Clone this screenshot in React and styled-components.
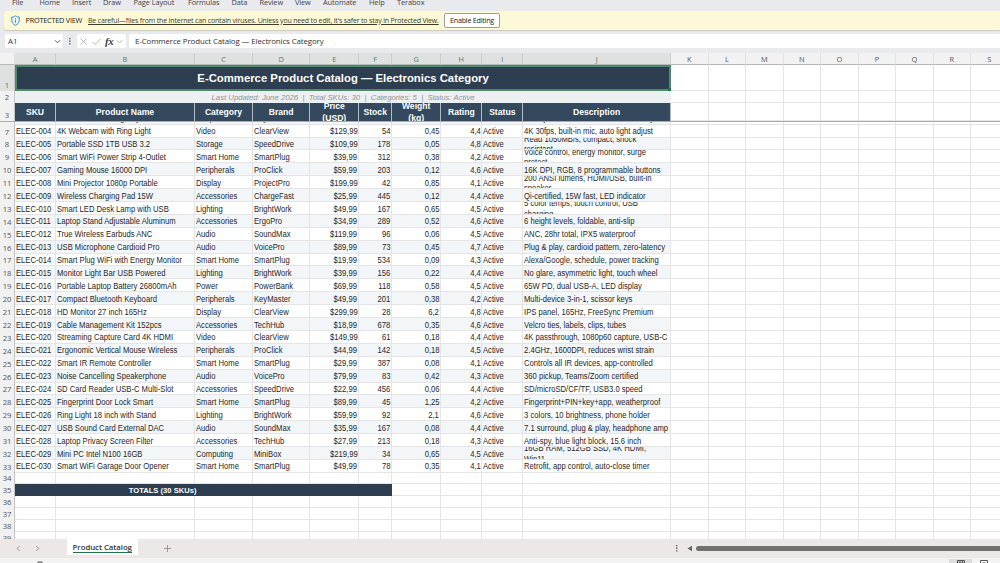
import { useState } from 'react';
import styled, { createGlobalStyle, css } from 'styled-components';

const theme = {
  ui: "'Open Sans', 'Noto Sans', sans-serif",
  sheet: "'Liberation Sans', Arial, sans-serif",
  navy: '#2c3e50',
  slate: '#34495e',
  green: '#217346',
  line: '#e5e5e5',
  chrome: '#e8eaee',
};

const GlobalStyle = createGlobalStyle`
  * {
    box-sizing: border-box;
  }

  body {
    margin: 0;
    overflow: hidden;
    background: ${theme.chrome};
  }
`;

const Window = styled.div`
  display: flex;
  flex-direction: column;
  width: 1000px;
  height: 563px;
  overflow: hidden;
  font-family: ${theme.ui};
  color: #333;
`;

const MenuBar = styled.nav`
  display: flex;
  flex: none;
  height: 11px;
  padding-left: 12px;
`;

const MenuItem = styled.span`
  flex: none;
  width: ${(p) => p.$width}px;
  margin-top: -3px;
  font-size: 7.4px;
  line-height: 11px;
  letter-spacing: -0.1px;
  white-space: nowrap;
  color: #444;
`;

const Notice = styled.div`
  display: flex;
  flex: none;
  align-items: center;
  height: 18.5px;
  margin-left: 4px;
  padding-left: 7px;
  border-radius: 3px 0 0 3px;
  background: #fdf9d6;
  box-shadow: 0 1px 1px #c9c9c5;
  font-size: 7.3px;
  white-space: nowrap;
`;

const NoticeTitle = styled.span`
  flex: none;
  width: 62.5px;
  margin-left: 5.5px;
  letter-spacing: -0.22px;
  color: #222;
`;

const NoticeLink = styled.span`
  flex: none;
  width: 349px;
  font-size: 7px;
  text-decoration: underline;
  letter-spacing: -0.17px;
  color: #3d3d2c;
`;

const EnableButton = styled.button`
  width: 56px;
  height: 15px;
  margin-left: 7px;
  padding: 0;
  border: 1px solid #9d9d9d;
  border-radius: 2px;
  background: #fff;
  font-family: inherit;
  font-size: 7.2px;
  line-height: 12px;
  letter-spacing: -0.25px;
  color: #222;
`;

const FormulaBar = styled.div`
  display: flex;
  flex: none;
  height: 23.5px;
  padding: 4.5px 0 5px 5px;
`;

const NameBox = styled.div`
  display: flex;
  align-items: center;
  justify-content: space-between;
  width: 58px;
  padding: 0 2px 0 3px;
  border-radius: 2px;
  background: #fff;
  font-size: 7.9px;
`;

const Dots = styled.div`
  display: flex;
  align-items: center;
  justify-content: center;
  width: 14px;
`;

const FormulaTools = styled.div`
  display: flex;
  align-items: center;
  width: 49px;
  padding-left: 2px;
  gap: 3px;
  border-radius: 2px;
  background: #fff;
`;

const Fx = styled.span`
  font-family: 'Liberation Serif', serif;
  font-size: 11px;
  font-style: italic;
  font-weight: bold;
  line-height: 10px;
  letter-spacing: -0.4px;
  color: #444;
`;

const FormulaInput = styled.div`
  flex: 1;
  margin-left: 3px;
  padding-left: 6px;
  border-radius: 2px 0 0 2px;
  background: #fff;
  font-size: 7.9px;
  line-height: 14px;
  letter-spacing: -0.12px;
  white-space: nowrap;
`;

const COLUMNS = '15px 41px 139px 58px 57.2px 49.2px 32.7px 49.2px 41.2px 40.7px 148px repeat(9, 37.5px)';

const Sheet = styled.main`
  flex: none;
  height: 486px;
  overflow: hidden;
  background: #fff;
`;

const GridRow = styled.div`
  display: grid;
  flex: none;
  grid-template-columns: ${COLUMNS};
  height: ${(p) => p.$height}px;
  width: 1030px;
  overflow: hidden;
`;

const Letter = styled.div`
  display: flex;
  align-items: flex-end;
  justify-content: center;
  border-right: 1px solid ${(p) => (p.$active ? '#cdcfce' : '#e2e2e2')};
  border-bottom: 1px solid #b5bab7;
  background: ${(p) => (p.$active ? '#dfe0e0' : '#f2f2f2')};
  font-size: 7.4px;
  line-height: 10px;
  color: ${(p) => (p.$active ? '#557a67' : '#555')};
`;

const RowNumber = styled.div`
  display: flex;
  align-items: flex-end;
  justify-content: center;
  border-right: 1px solid #c4c4c4;
  background: ${(p) => (p.$active ? '#dfe0e0' : '#f1f1f1')};
  font-size: 7.7px;
  line-height: 11px;
  letter-spacing: -0.1px;
  color: ${(p) => (p.$active ? '#557a67' : '#555')};
`;

const Cell = styled.div`
  display: flex;
  align-items: center;
  justify-content: ${(p) => (p.$right ? 'flex-end' : 'flex-start')};
  min-width: 0;
  overflow: hidden;
  padding: 1.6px 1px 0;
  border-right: 1px solid ${theme.line};
  border-bottom: 1px solid ${theme.line};
  background: ${(p) => (p.$shaded ? '#f3f6f9' : '#fff')};
`;

// condensed cell face: taller glyphs on the same advance width
const CellText = styled.span`
  flex: none;
  font-family: ${theme.sheet};
  font-size: 8.5px;
  line-height: 10.4px;
  white-space: pre;
  transform: scaleX(0.9);
  transform-origin: ${(p) => (p.$right ? 'right' : 'left')} center;
  color: #262626;
`;

const bar = css`
  display: flex;
  align-items: center;
  justify-content: center;
  font-family: ${theme.sheet};
  white-space: nowrap;
`;

const TitleCell = styled.div`
  ${bar}
  position: relative;
  grid-column: span 10;
  border: 2px solid #4d8a69;
  background: ${theme.navy};
  font-size: 11.33px;
  font-weight: bold;
  color: #fff;
`;

const FillHandle = styled.i`
  position: absolute;
  right: -2px;
  bottom: -2px;
  width: 3px;
  height: 3px;
  background: ${theme.green};
`;

const SubtitleCell = styled.div`
  ${bar}
  grid-column: span 10;
  padding-top: 1px;
  background: #ecf0f1;
  font-size: 7.75px;
  font-style: italic;
  white-space: pre;
  color: #8f9496;
`;

const HeadCell = styled.div`
  ${bar}
  overflow: hidden;
  padding-top: 0.7px;
  border-right: 1px solid #b3bcc4;
  background: ${theme.slate};
  font-size: 8.6px;
  font-weight: bold;
  line-height: 12px;
  text-align: center;
  white-space: pre-line;
  color: #fff;
`;

const TotalsCell = styled.div`
  ${bar}
  grid-column: span 4;
  background: ${theme.navy};
  font-size: 7.6px;
  font-weight: bold;
  color: #fff;
`;

const TotalsFill = styled.div`
  grid-column: span 2;
  background: ${theme.navy};
`;

const FreezeLine = styled.div`
  height: 1px;
  background: #a9adb0;
`;

const Clip = styled.div`
  display: flex;
  flex-direction: column;
  justify-content: flex-end;
  height: 2.7px;
  overflow: hidden;
`;

const TabBar = styled.footer`
  display: flex;
  flex: none;
  align-items: center;
  height: 18.5px;
  background: #ece8e7;
`;

const TabArrows = styled.div`
  display: flex;
  gap: 12px;
  width: 66.5px;
  padding-left: 15px;
`;

const Tab = styled.div`
  display: flex;
  justify-content: center;
  align-self: flex-start;
  width: 71.5px;
  height: 16px;
  background: #fff;

  span {
    height: 14px;
    border-bottom: 1.5px solid ${theme.green};
    font-size: 7.8px;
    font-weight: 600;
    line-height: 16px;
    letter-spacing: -0.05px;
    white-space: nowrap;
    color: #333;
  }
`;

const AddTab = styled.div`
  display: flex;
  flex: 1;
  padding-left: 26px;
`;

const ScrollArea = styled.div`
  display: flex;
  align-items: center;
  gap: 2.5px;
  width: 316px;
  height: 14px;

  &::after {
    content: '';
    flex: 1;
    height: 5px;
    border-radius: 3px 0 0 3px;
    background: #707070;
  }
`;

const StatusBar = styled.div`
  display: flex;
  flex: 1;
  min-height: 0;
  overflow: hidden;
  padding-left: 6px;
  background: #f3f3f3;
  font-size: 7.2px;
  line-height: 14px;

  > svg {
    margin: 3px 0 0 8px;
  }
`;

const StatusText = styled.span`
  width: 22px;
  margin-top: 0.5px;
`;

const ViewButton = styled.div`
  display: flex;
  justify-content: center;
  width: 23px;
  height: 12px;
  margin-top: 1px;
  padding-top: 1.5px;
  background: ${(p) => (p.$active ? '#dcdcdc' : 'transparent')};
`;

const ViewButtons = styled.div`
  display: flex;
  margin-left: auto;
  padding-right: 5px;
`;

const menus = [
  ['File', 27.5],
  ['Home', 32.5],
  ['Insert', 31],
  ['Draw', 30.5],
  ['Page Layout', 54.5],
  ['Formulas', 43.5],
  ['Data', 28],
  ['Review', 35.5],
  ['View', 28],
  ['Automate', 46],
  ['Help', 28],
  ['Terabox', 30],
];

const headings = [
  'SKU',
  'Product Name',
  'Category',
  'Brand',
  'Price\n(USD)',
  'Stock',
  'Weight\n(kg)',
  'Rating',
  'Status',
  'Description',
];

// name, category, brand, price, stock, weight, rating, description
const products = [
  ['4K Webcam with Ring Light', 'Video', 'ClearView', '$129,99', '54', '0,45', '4,4', '4K 30fps, built-in mic, auto light adjust'],
  ['Portable SSD 1TB USB 3.2', 'Storage', 'SpeedDrive', '$109,99', '178', '0,05', '4,8', 'Read 1050MB/s, compact, shock\nresistant'],
  ['Smart WiFi Power Strip 4-Outlet', 'Smart Home', 'SmartPlug', '$39,99', '312', '0,38', '4,2', 'Voice control, energy monitor, surge\nprotect'],
  ['Gaming Mouse 16000 DPI', 'Peripherals', 'ProClick', '$59,99', '203', '0,12', '4,6', '16K DPI, RGB, 8 programmable buttons'],
  ['Mini Projector 1080p Portable', 'Display', 'ProjectPro', '$199,99', '42', '0,85', '4,1', '200 ANSI lumens, HDMI/USB, built-in\nspeaker'],
  ['Wireless Charging Pad 15W', 'Accessories', 'ChargeFast', '$25,99', '445', '0,12', '4,4', 'Qi-certified, 15W fast, LED indicator'],
  ['Smart LED Desk Lamp with USB', 'Lighting', 'BrightWork', '$49,99', '167', '0,65', '4,5', '5 color temps, touch control, USB\ncharging'],
  ['Laptop Stand Adjustable Aluminum', 'Accessories', 'ErgoPro', '$34,99', '289', '0,52', '4,6', '6 height levels, foldable, anti-slip'],
  ['True Wireless Earbuds ANC', 'Audio', 'SoundMax', '$119,99', '96', '0,06', '4,5', 'ANC, 28hr total, IPX5 waterproof'],
  ['USB Microphone Cardioid Pro', 'Audio', 'VoicePro', '$89,99', '73', '0,45', '4,7', 'Plug & play, cardioid pattern, zero-latency'],
  ['Smart Plug WiFi with Energy Monitor', 'Smart Home', 'SmartPlug', '$19,99', '534', '0,09', '4,3', 'Alexa/Google, schedule, power tracking'],
  ['Monitor Light Bar USB Powered', 'Lighting', 'BrightWork', '$39,99', '156', '0,22', '4,4', 'No glare, asymmetric light, touch wheel'],
  ['Portable Laptop Battery 26800mAh', 'Power', 'PowerBank', '$69,99', '118', '0,58', '4,5', '65W PD, dual USB-A, LED display'],
  ['Compact Bluetooth Keyboard', 'Peripherals', 'KeyMaster', '$49,99', '201', '0,38', '4,2', 'Multi-device 3-in-1, scissor keys'],
  ['HD Monitor 27 inch 165Hz', 'Display', 'ClearView', '$299,99', '28', '6,2', '4,8', 'IPS panel, 165Hz, FreeSync Premium'],
  ['Cable Management Kit 152pcs', 'Accessories', 'TechHub', '$18,99', '678', '0,35', '4,6', 'Velcro ties, labels, clips, tubes'],
  ['Streaming Capture Card 4K HDMI', 'Video', 'ClearView', '$149,99', '61', '0,18', '4,4', '4K passthrough, 1080p60 capture, USB-C'],
  ['Ergonomic Vertical Mouse Wireless', 'Peripherals', 'ProClick', '$44,99', '142', '0,18', '4,5', '2.4GHz, 1600DPI, reduces wrist strain'],
  ['Smart IR Remote Controller', 'Smart Home', 'SmartPlug', '$29,99', '387', '0,08', '4,1', 'Controls all IR devices, app-controlled'],
  ['Noise Cancelling Speakerphone', 'Audio', 'VoicePro', '$79,99', '83', '0,42', '4,3', '360 pickup, Teams/Zoom certified'],
  ['SD Card Reader USB-C Multi-Slot', 'Accessories', 'SpeedDrive', '$22,99', '456', '0,06', '4,4', 'SD/microSD/CF/TF, USB3.0 speed'],
  ['Fingerprint Door Lock Smart', 'Smart Home', 'SmartPlug', '$89,99', '45', '1,25', '4,2', 'Fingerprint+PIN+key+app, weatherproof'],
  ['Ring Light 18 inch with Stand', 'Lighting', 'BrightWork', '$59,99', '92', '2,1', '4,6', '3 colors, 10 brightness, phone holder'],
  ['USB Sound Card External DAC', 'Audio', 'SoundMax', '$35,99', '167', '0,08', '4,4', '7.1 surround, plug & play, headphone amp'],
  ['Laptop Privacy Screen Filter', 'Accessories', 'TechHub', '$27,99', '213', '0,18', '4,3', 'Anti-spy, blue light block, 15.6 inch'],
  ['Mini PC Intel N100 16GB', 'Computing', 'MiniBox', '$219,99', '34', '0,65', '4,5', '16GB RAM, 512GB SSD, 4K HDMI,\nWin11'],
  ['Smart WiFi Garage Door Opener', 'Smart Home', 'SmartPlug', '$49,99', '78', '0,35', '4,1', 'Retrofit, app control, auto-close timer'],
];

// scrolled almost entirely under the frozen header
const scrolledOut = ['Mechanical Gaming Keyboard', 'Peripherals', 'KeyMaster', '$89.99', '156', '0.95', '4.7', 'Cherry MX Blue switches full RGB key'];

const blanks = (count) => Array.from({ length: count }, (_, i) => <Cell key={i} />);

const ProductRow = ({ number, product }) => {
  const [name, category, brand, price, stock, weight, rating, description] = product;
  const shaded = number % 2 === 0;
  const sku = `ELEC-${String(number - 3).padStart(3, '0')}`;

  return (
    <GridRow $height={12.9}>
      <RowNumber>{number}</RowNumber>
      {[sku, name, category, brand].map((text) => (
        <Cell key={text} $shaded={shaded}>
          <CellText>{text}</CellText>
        </Cell>
      ))}
      {[price, stock, weight, rating].map((text, i) => (
        <Cell key={i} $shaded={shaded} $right>
          <CellText $right>{text}</CellText>
        </Cell>
      ))}
      <Cell $shaded={shaded}>
        <CellText>Active</CellText>
      </Cell>
      <Cell $shaded={shaded}>
        <CellText>{description}</CellText>
      </Cell>
      {blanks(9)}
    </GridRow>
  );
};

const Chevron = ({ color = '#555', dir = 'down' }) => {
  const turn = { down: 0, left: 90, right: -90 }[dir];
  return (
    <svg width="7" height="7" viewBox="0 0 7 7" fill="none" stroke={color}>
      <path d="M1 2.3 3.5 4.8 6 2.3" transform={`rotate(${turn} 3.5 3.5)`} />
    </svg>
  );
};

const ShieldIcon = () => (
  <svg width="9" height="11" viewBox="0 0 9 11" fill="none" stroke="#3f92c4">
    <path d="M4.5.8C3.4 1.7 2.1 2 .8 2v3.3c0 2.4 1.5 4 3.7 5 2.2-1 3.7-2.6 3.7-5V2C6.9 2 5.6 1.7 4.5.8Z" fill="#e9f5fb" />
    <path d="M4.5 4.7v3M4.5 2.9v1" />
  </svg>
);

const MoreDots = () => (
  <svg width="2" height="8" fill="#666">
    <path d="M0 1h1.5v1.3H0zM0 3.6h1.5v1.3H0zM0 6.2h1.5v1.3H0z" />
  </svg>
);

const App = () => {
  const [selected] = useState({ name: 'A1', value: 'E-Commerce Product Catalog — Electronics Category' });

  return (
    <Window>
      <GlobalStyle />
      <MenuBar>
        {menus.map(([label, width]) => (
          <MenuItem key={label} $width={width}>{label}</MenuItem>
        ))}
      </MenuBar>
      <Notice>
        <ShieldIcon />
        <NoticeTitle>PROTECTED VIEW</NoticeTitle>
        <NoticeLink>
          Be careful—files from the Internet can contain viruses. Unless you need to edit, it's safer to stay in Protected View.
        </NoticeLink>
        <EnableButton>Enable Editing</EnableButton>
      </Notice>
      <FormulaBar>
        <NameBox>
          {selected.name}
          <Chevron />
        </NameBox>
        <Dots>
          <MoreDots />
        </Dots>
        <FormulaTools>
          <svg width="9" height="9" stroke="#bbb" fill="none">
            <path d="m1.5 1.5 6 6m0-6-6 6" />
          </svg>
          <svg width="11" height="9" stroke="#bbb" fill="none">
            <path d="m1.5 5 2.5 2.5 6-6" />
          </svg>
          <Fx>fx</Fx>
          <Chevron color="#aaa" />
        </FormulaTools>
        <FormulaInput>{selected.value}</FormulaInput>
      </FormulaBar>

      <Sheet>
        <GridRow $height={11.5}>
          <Letter />
          {[...'ABCDEFGHIJKLMNOPQRS'].map((letter, i) => (
            <Letter key={letter} $active={i < 10}>{letter}</Letter>
          ))}
        </GridRow>
        <GridRow $height={26}>
          <RowNumber $active>1</RowNumber>
          <TitleCell>
            {selected.value}
            <FillHandle />
          </TitleCell>
          {blanks(9)}
        </GridRow>
        <GridRow $height={12}>
          <RowNumber>2</RowNumber>
          <SubtitleCell>{'Last Updated: June 2026  |  Total SKUs: 30  |  Categories: 5  |  Status: Active'}</SubtitleCell>
          {blanks(9)}
        </GridRow>
        <GridRow $height={18.5}>
          <RowNumber>3</RowNumber>
          {headings.map((text) => (
            <HeadCell key={text}>{text}</HeadCell>
          ))}
          {blanks(9)}
        </GridRow>
        <FreezeLine />
        <Clip>
          <ProductRow number={6} product={scrolledOut} />
        </Clip>
        {products.map((product, i) => (
          <ProductRow key={product[0]} number={i + 7} product={product} />
        ))}
        <GridRow $height={11.7}>
          <RowNumber>34</RowNumber>
          {blanks(19)}
        </GridRow>
        <GridRow $height={11.9}>
          <RowNumber>35</RowNumber>
          <TotalsCell>TOTALS (30 SKUs)</TotalsCell>
          <TotalsFill />
          {blanks(13)}
        </GridRow>
        {[36, 37, 38, 39].map((number) => (
          <GridRow key={number} $height={11.8}>
            <RowNumber>{number}</RowNumber>
            {blanks(19)}
          </GridRow>
        ))}
      </Sheet>

      <TabBar>
        <TabArrows>
          <Chevron color="#999" dir="left" />
          <Chevron color="#999" dir="right" />
        </TabArrows>
        <Tab>
          <span>Product Catalog</span>
        </Tab>
        <AddTab>
          <svg width="7" height="7" stroke="#999">
            <path d="M3.5 0v7M0 3.5h7" />
          </svg>
        </AddTab>
        <Dots>
          <MoreDots />
        </Dots>
        <ScrollArea>
          <svg width="9" height="7" fill="#666">
            <path d="M8 .8v5.4L3.5 3.5Z" />
          </svg>
        </ScrollArea>
      </TabBar>
      <StatusBar>
        <StatusText>Ready</StatusText>
        <svg width="8" height="8" fill="none" stroke="#555">
          <path d="M.5 2.5v5h7v-5ZM2 2.5v-1.5h4v1.5" />
        </svg>
        <ViewButtons>
          <ViewButton $active>
            <svg width="8" height="8" fill="none" stroke="#555">
              <path d="M.5.5h7v7h-7ZM.5 3h7M.5 5.5h7M3 .5v7M5.5.5v7" />
            </svg>
          </ViewButton>
          <ViewButton>
            <svg width="8" height="8" fill="none" stroke="#555">
              <path d="M.5.5h7v7h-7ZM2.5 3h3M2.5 5h3" />
            </svg>
          </ViewButton>
        </ViewButtons>
      </StatusBar>
    </Window>
  );
};

export default App;
